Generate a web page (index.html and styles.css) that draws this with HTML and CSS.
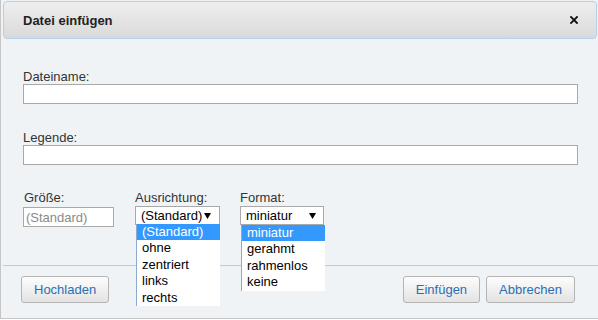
FILE: index.html
```html
<!DOCTYPE html>
<html lang="de">

<head>
    <meta charset="UTF-8">
    <meta name="viewport" content="width=device-width, initial-scale=1.0">
    <title>Datei einfügen</title>
    <link rel="stylesheet" href="styles.css">
</head>

<body>
    <div class="dialog">
        <div class="titlebar">
            <span class="title">Datei einfügen</span>
            <span class="close">
                <svg width="8" height="8" viewBox="0 0 8 8">
                    <path d="M1 1 L7 7 M7 1 L1 7" stroke="#111" stroke-width="1.8" stroke-linecap="square" />
                </svg>
            </span>
        </div>

        <div class="content">
            <div class="field">
                <label>Dateiname:</label>
                <input type="text" class="text wide" />
            </div>

            <div class="field">
                <label>Legende:</label>
                <input type="text" class="text wide" />
            </div>

            <div class="row">
                <div class="col col-size">
                    <label>Größe:</label>
                    <input type="text" class="text small" placeholder="(Standard)" />
                </div>

                <div class="col col-align">
                    <label>Ausrichtung:</label>
                    <div class="select">
                        <span>(Standard)</span>
                        <svg class="arrow" width="7" height="6" viewBox="0 0 7 6">
                            <path d="M0 0 H7 L3.5 6 Z" fill="#000" />
                        </svg>
                        <ul class="options">
                            <li class="selected">(Standard)</li>
                            <li>ohne</li>
                            <li>zentriert</li>
                            <li>links</li>
                            <li>rechts</li>
                        </ul>
                    </div>
                </div>

                <div class="col col-format">
                    <label>Format:</label>
                    <div class="select">
                        <span>miniatur</span>
                        <svg class="arrow" width="7" height="6" viewBox="0 0 7 6">
                            <path d="M0 0 H7 L3.5 6 Z" fill="#000" />
                        </svg>
                        <ul class="options">
                            <li class="selected">miniatur</li>
                            <li>gerahmt</li>
                            <li>rahmenlos</li>
                            <li>keine</li>
                        </ul>
                    </div>
                </div>
            </div>
        </div>

        <div class="footer">
            <button class="btn">Hochladen</button>
            <div class="actions">
                <button class="btn">Einfügen</button>
                <button class="btn">Abbrechen</button>
            </div>
        </div>
    </div>
</body>

</html>
```

FILE: styles.css
```css
body {
    margin: 0;
    background: #fff;
    font-family: "Liberation Sans", Arial, sans-serif;
    font-size: 13px;
    line-height: 15px;
    color: #333;
}

.dialog {
    display: flex;
    flex-direction: column;
    box-sizing: border-box;
    height: 319px;
    border-left: 1px solid #c6c6c6;
    border-bottom: 1px solid #c6c6c6;
    background: #f0f3f6;
}

.titlebar {
    display: flex;
    justify-content: space-between;
    align-items: center;
    box-sizing: border-box;
    height: 38px;
    margin: 1px 1px 0 2px;
    padding: 0 18px 0 19px;
    border: 1px solid #b3d1ec;
    border-radius: 4px;
    background: linear-gradient(#eeeeee, #dadada);
}

.title {
    font-weight: bold;
    color: #222;
}

.close {
    display: flex;
}

.content {
    flex: 1;
    padding: 30px 0 0 22px;
}

.field {
    display: flex;
    flex-direction: column;
    margin-bottom: 26px;
}

.field + .field {
    margin-bottom: 25px;
}

label {
    display: block;
    height: 15px;
}

.text {
    box-sizing: border-box;
    height: 20px;
    margin: 0;
    padding: 0 2px;
    border: 1px solid #a9a9a9;
    background: #fff;
    font-family: inherit;
    font-size: 13px;
    color: #000;
    outline: none;
}

.text::placeholder {
    color: #8a8a8a;
}

.wide {
    width: 555px;
}

.small {
    width: 91px;
    margin-top: 2px;
}

.row {
    display: flex;
    gap: 21px;
}

.col-format {
    margin-left: -1px;
}

.col-size label {
    padding-left: 1px;
}

.select {
    position: relative;
    display: flex;
    justify-content: space-between;
    align-items: center;
    box-sizing: border-box;
    height: 19px;
    margin-top: 1px;
    padding: 0 8px 0 5px;
    border: 1px solid #a9a9a9;
    background: #fff;
    color: #000;
}

.col-align .select {
    width: 85px;
}

.col-format .select {
    width: 84px;
    padding-right: 7px;
}

.options {
    position: absolute;
    top: 17px;
    left: 0;
    width: 84px;
    margin: 0;
    padding: 0;
    list-style: none;
    box-sizing: border-box;
    border-left: 1px solid #8fa9cc;
    background: #fff;
    color: #000;
}

.col-format .options {
    top: 18px;
    left: 0;
}

.options li {
    height: 16.4px;
    line-height: 16px;
    padding-left: 5px;
}

.options .selected {
    background: #3399ff;
    color: #fff;
}

.footer {
    display: flex;
    justify-content: space-between;
    margin-left: 2px;
    padding: 10px 23px 15px 18px;
    border-top: 1px solid #c8c8c8;
}

.actions {
    display: flex;
    gap: 6px;
}

.btn {
    box-sizing: border-box;
    height: 27px;
    padding: 0 12px;
    border: 1px solid #b4b4b4;
    border-radius: 3px;
    background: linear-gradient(#fdfdfd, #e3e3e3);
    font-family: inherit;
    font-size: 13px;
    color: #2b6fb3;
}
```
